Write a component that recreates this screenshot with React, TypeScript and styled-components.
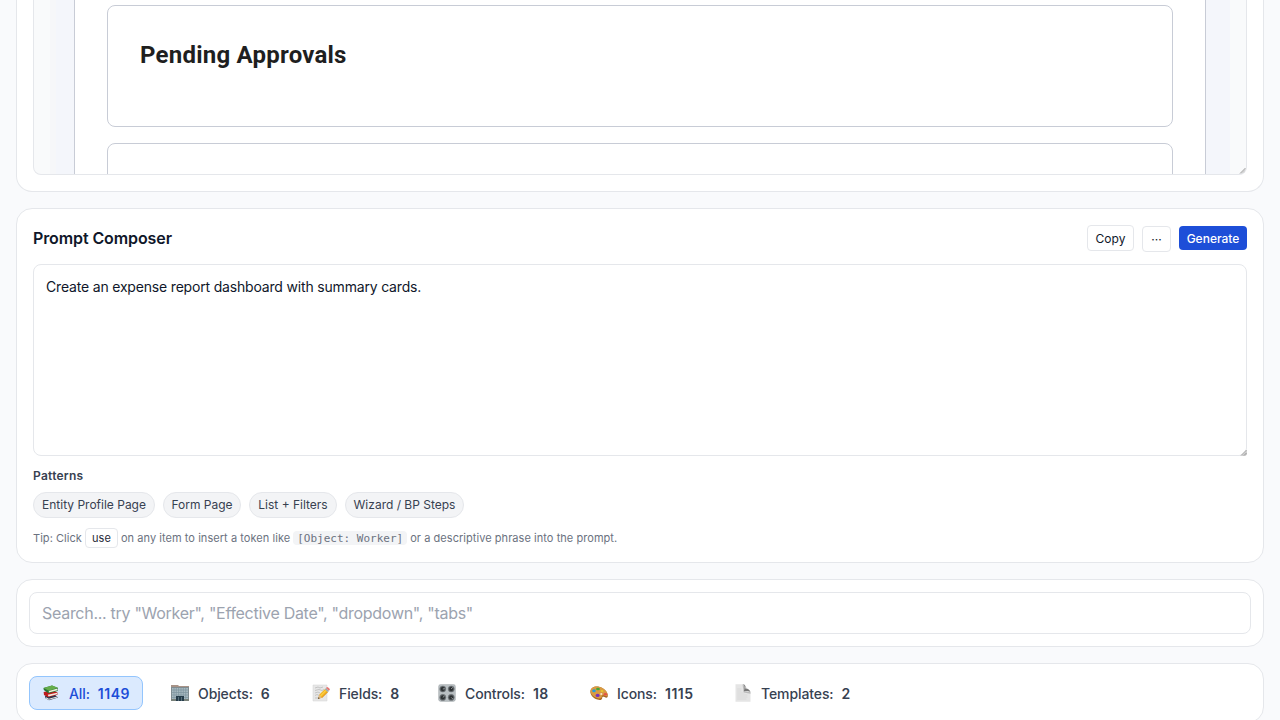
import React from "react";
import styled, { createGlobalStyle } from "styled-components";

const GlobalStyle = createGlobalStyle`
  *, *::before, *::after { box-sizing: border-box; }
  html, body { margin: 0; padding: 0; background: #f9fafb; overflow: hidden; }
  body { font-family: Inter, "Liberation Sans", sans-serif; color: #0f172a; }
  button, textarea, input { font-family: inherit; margin: 0; }
`;

const Page = styled.main`
  height: 720px;
  overflow: hidden;
  display: flex;
  flex-direction: column;
  gap: 16px;
  padding: 0 16px;
  background: #f9fafc;
  & > * { flex-shrink: 0; }
`;

const Panel = styled.section<{ $height: number; $pad?: string }>`
  height: ${(p) => p.$height}px;
  padding: ${(p) => p.$pad ?? "12px"};
  border: 1px solid #e5e7eb;
  border-radius: 16px;
  background: #fff;
`;

const PreviewPanel = styled(Panel)`
  border-top: 0;
  border-radius: 0 0 16px 16px;
`;

const Preview = styled.div`
  position: relative;
  height: 175px;
  padding: 0 16px;
  overflow: hidden;
  border: 1px solid #e5e7eb;
  border-top: 0;
  border-radius: 0 0 8px 8px;
  background: #f9fafb;
`;

const Canvas = styled.div`
  height: 100%;
  padding: 0 24px;
  background: linear-gradient(90deg, #f6f7f9 6px, #f4f6fb 6px);
`;

const Sheet = styled.div`
  height: 100%;
  display: flex;
  flex-direction: column;
  gap: 16px;
  padding: 5px 32px 0;
  border: solid #c8ccd6;
  border-width: 0 1px;
  background: #fff;
`;

const SheetCard = styled.div`
  flex: 0 0 122px;
  padding: 33px 32px 32px;
  border: 1px solid #c8ccd6;
  border-radius: 8px;
`;

const SheetTitle = styled.h2`
  margin: 0;
  font: 700 24px/32px Roboto, sans-serif;
  letter-spacing: 0.23px;
  color: #1f1f1f;
`;

const Grip = styled.svg`
  position: absolute;
  right: 0;
  bottom: 0;
  width: 7px;
  height: 7px;
`;

const Header = styled.header`
  display: flex;
  align-items: flex-start;
  justify-content: space-between;
  height: 27px;
  margin-bottom: 12px;
`;

const Title = styled.h1`
  margin: 1px 0 0;
  font-size: 16px;
  line-height: 24px;
  font-weight: 600;
  letter-spacing: -0.1px;
`;

const Actions = styled.div`
  display: flex;
  align-items: flex-start;
  gap: 8px;
`;

const Button = styled.button<{ $width: number; $primary?: boolean; $drop?: number; $inset?: number }>`
  width: ${(p) => p.$width}px;
  height: ${(p) => (p.$primary ? 24 : 26)}px;
  margin-top: ${(p) => p.$drop ?? 0}px;
  padding: ${(p) => p.$inset ?? 0}px 0 0;
  border: ${(p) => (p.$primary ? "0" : "1px solid #e5e7eb")};
  border-radius: 4px;
  background: ${(p) => (p.$primary ? "#1d4ed8" : "#fff")};
  color: ${(p) => (p.$primary ? "#fff" : "#0f172a")};
  font-size: 12px;
  line-height: 16px;
  font-weight: ${(p) => (p.$primary ? 500 : 400)};
  white-space: nowrap;
`;

const Editor = styled.div`
  position: relative;
  height: 192px;
`;

const PromptArea = styled.textarea`
  display: block;
  width: 100%;
  height: 100%;
  padding: 12px;
  resize: none;
  outline: none;
  border: 1px solid #e5e7eb;
  border-radius: 8px;
  background: #fff;
  color: #0f172a;
  font-size: 14px;
  line-height: 20px;
  letter-spacing: -0.18px;
`;

const PatternsLabel = styled.div`
  margin-top: 12px;
  font-size: 12px;
  line-height: 16px;
  font-weight: 600;
  letter-spacing: 0.25px;
  color: #374151;
`;

const Chips = styled.div`
  display: flex;
  gap: 8px;
  margin-top: 8px;
`;

const Chip = styled.button<{ $width: number }>`
  width: ${(p) => p.$width}px;
  height: 26px;
  padding: 0;
  border: 1px solid #e5e7eb;
  border-radius: 13px;
  background: #f3f4f6;
  color: #374151;
  font-size: 12px;
  line-height: 16px;
  white-space: nowrap;
`;

const Tip = styled.p`
  display: flex;
  align-items: center;
  height: 20px;
  margin: 10px 0 0;
  font-size: 11px;
  letter-spacing: 0.05px;
  color: #6b7280;
  white-space: nowrap;
`;

const Key = styled.span`
  width: 33px;
  height: 20px;
  margin: 0 3px;
  border: 1px solid #e5e7eb;
  border-radius: 4px;
  background: #fff;
  color: #1f2937;
  line-height: 18px;
  text-align: center;
`;

const Code = styled.code`
  width: 114px;
  height: 14px;
  margin: 0 3px;
  border-radius: 4px;
  background: #f3f4f6;
  font: 11px/15px "DejaVu Sans Mono", monospace;
  letter-spacing: 0;
  text-align: center;
`;

const Search = styled.input`
  display: block;
  width: 100%;
  height: 42px;
  padding: 0 12px;
  border: 1px solid #e5e7eb;
  border-radius: 8px;
  outline: none;
  font-size: 16px;
  letter-spacing: -0.285px;
  &::placeholder { color: #9ca3af; opacity: 1; }
`;

const Tabs = styled.nav`
  display: flex;
  gap: 15px;
`;

const Tab = styled.button<{ $width: number; $active?: boolean }>`
  display: flex;
  align-items: center;
  width: ${(p) => p.$width}px;
  height: 34px;
  padding: 0 12px;
  border: 1px solid ${(p) => (p.$active ? "#93c5fd" : "transparent")};
  border-radius: 8px;
  background: ${(p) => (p.$active ? "#dbeafe" : "transparent")};
  color: ${(p) => (p.$active ? "#1d4ed8" : "#374151")};
  font-size: 14px;
  line-height: 20px;
  font-weight: 500;
  white-space: nowrap;
  svg { flex: none; width: 18px; height: 18px; margin-right: 9px; }
  span { padding-top: 2px; letter-spacing: -0.1px; }
  strong { padding-top: 2px; margin-left: 8px; font-weight: 600; letter-spacing: 0.5px; }
`;

const BooksIcon = () => (
  <svg viewBox="0 0 18 18">
    <path d="M3 12l9-2 4 3.5-9 2.8-3.5-2z" fill="#29364d" />
    <path d="M4 13.3l2.8 1.4 8.4-2.3v1.1l-8.4 2.3-2.8-1.3z" fill="#eeeae4" />
    <path d="M1.6 8l9-1.7 4.9 2.2v2.2L6 13.3 2 11z" fill="#bd1c1c" />
    <path d="M5.8 10.8l9.4-2.1v1.5l-8.7 2.2z" fill="#f4e9df" />
    <path d="M1.5 4.1L10 1.4l6 2.7-.3 3-9.3 2.1L1.8 6z" fill="#277434" />
    <path d="M1.5 4.1L10 1.4l6 2.4-9.2 3z" fill="#65ad4b" />
    <path d="M6.8 7.1l8.7-2.5v1.7l-8.7 2.1z" fill="#f0f0de" />
  </svg>
);

const OfficeIcon = () => (
  <svg viewBox="0 0 18 18">
    <path d="M0 1h7v1h11v15H0z" fill="#7f8c91" />
    <path d="M0 1h7l1 1h10v1H0z" fill="#a89387" />
    <path d="M1 4h16v11H1z" fill="#a9bac1" />
    <path d="M1 6h16M1 8.5h16M1 11h16M1 13.5h16M3 4v11M5.3 4v11M7.6 4v11M10 4v11M12.3 4v11M14.7 4v11" stroke="#7c939d" strokeWidth=".7" />
    <path d="M0 15h18v2H0z" fill="#79817a" />
    <path d="M5 12h8v5H5z" fill="#263c4a" />
    <path d="M7.5 13v4M10.5 13v4" stroke="#6e8791" strokeWidth=".7" />
  </svg>
);

const MemoIcon = () => (
  <svg viewBox="0 0 18 18">
    <path d="M1 1h14v16H1z" fill="#e7e7e7" stroke="#d2d2d2" strokeWidth=".5" />
    <path d="M3 4l3-1 2 1 3-1M3 6.5l4-1 3 1 2-1M3 9l3-1 2 1M3 11.5l2-1 2 1M3 14h4" stroke="#b4b4b4" strokeWidth=".7" fill="none" />
    <path d="M6 15l1.2-4.2L13 5l3 3-6 5.8z" fill="#f4b724" />
    <path d="M8 12.5l6-6.2" stroke="#ffdc59" strokeWidth="1" />
    <path d="M9.7 13.9L15.5 8" stroke="#d78316" strokeWidth=".8" />
    <path d="M6 15l1.2-4.2 2.6 2.9z" fill="#dfb88a" />
    <path d="M6 15l.6-1.8 1.1 1z" fill="#35312d" />
    <path d="M12.8 5.2l1.3-1.3 3 3L15.8 8z" fill="#9caab0" />
    <path d="M14 4l.7-.8q.7-.5 1.5.2l1.2 1.2q.8.7.2 1.5l-.6.7z" fill="#e87572" />
  </svg>
);

const KnobsIcon = () => (
  <svg viewBox="0 0 18 18">
    <rect x=".3" y=".3" width="17.4" height="17.4" rx="2.4" fill="#aeb4b7" />
    <rect x="1" y="1" width="16" height="16" rx="2" fill="#b9bfc2" />
    {[[4.8, 5], [13.2, 5], [4.8, 13.4], [13.2, 13.4]].map(([x, y], i) => (
      <g key={i}>
        <circle cx={x} cy={y} r="3.1" fill="#54595c" stroke="#7b8184" strokeWidth=".5" />
        <circle cx={x} cy={y} r="1.9" fill="#2a2e30" />
        <path d={i === 3 ? `M${x} ${y}l1.7 1.7` : i === 2 ? `M${x} ${y}l1.7-1.4` : `M${x} ${y}l${i ? "1.4-1.6" : "2-.3"}`} stroke="#b5bbbd" strokeWidth=".8" />
      </g>
    ))}
  </svg>
);

const PaletteIcon = () => (
  <svg viewBox="0 0 18 18">
    <path d="M.4 7.2C.7 3.7 4 2 8 2.5c5.3.7 10 5.4 9.8 9.3-.1 2.3-1.6 2.2-3.3 1.3-1.6-.9-2.2-.4-2.3.8-.2 2.1-2.2 2.4-4.9 1.6C3.1 14.2 0 10.6.4 7.2z" fill="#a76622" />
    <path d="M.5 6.8C.9 3.7 4 2 8 2.5c5 .6 9.5 4.6 9.6 8.1.1 2.1-1.4 1.9-3.2 1-1.7-.8-2.5-.1-2.6 1.2-.1 1.9-2.2 2.1-4.7 1.2C3.1 12.8.2 9.8.5 6.8z" fill="#d99b43" />
    <ellipse cx="8" cy="5" rx="1.9" ry="1.3" fill="#42a83a" />
    <ellipse cx="4" cy="6.7" rx="1.8" ry="1.5" fill="#259fd7" />
    <ellipse cx="12" cy="7" rx="1.4" ry="1.1" fill="#e8c92c" />
    <ellipse cx="15.4" cy="10.2" rx="1.7" ry="1.2" fill="#e35445" />
    <ellipse cx="7.6" cy="11.4" rx="2" ry="1.6" fill="#7931bc" />
    <ellipse cx="11.3" cy="10" rx="1.1" ry=".8" fill="#fff" />
  </svg>
);

const PageIcon = () => (
  <svg viewBox="0 0 18 18">
    <path d="M1.5.3h8.2L16.5 8v9.7h-15z" fill="#e5e5e5" />
    <path d="M8.5.3c2.2.8 2.6 3.4 1.5 6.8l6.5 1.2v1.5L9.8 8.4 8.5.3z" fill="#bababa" />
    <path d="M9 0c3.3 1.4 2.4 3.3 2.3 4.4 1.9-.2 4.9 1.4 5.2 3.8-1.9-1.5-4.2-1.2-6.8-.9C10.8 4.5 11.2 1.8 9 0z" fill="#777" />
    <path d="M3.3 5h4M3.3 7h4M3.3 9h7M3.3 11h10M3.3 13h10M3.3 15h9" stroke="#d0d0d0" strokeWidth=".6" />
  </svg>
);

const ResizeGrip = () => (
  <Grip viewBox="0 0 7 7">
    <path d="M1 7L7 1v4.5L5.5 7z" fill="#d0d0d0" />
    <path d="M1 6.5L6.5 1M4 6.5L6.5 4" stroke="#8c8c8c" strokeWidth=".8" fill="none" />
  </Grip>
);

const patterns = [
  { label: "Entity Profile Page", width: 122 },
  { label: "Form Page", width: 78 },
  { label: "List + Filters", width: 88 },
  { label: "Wizard / BP Steps", width: 119 },
];

const tabs = [
  { label: "All:", count: 1149, width: 114, icon: <BooksIcon /> },
  { label: "Objects:", count: 6, width: 126, icon: <OfficeIcon /> },
  { label: "Fields:", count: 8, width: 111, icon: <MemoIcon /> },
  { label: "Controls:", count: 18, width: 137, icon: <KnobsIcon /> },
  { label: "Icons:", count: 1115, width: 129, icon: <PaletteIcon /> },
  { label: "Templates:", count: 2, width: 140, icon: <PageIcon /> },
];

export default function App() {
  return (
    <>
      <GlobalStyle />
      <Page>
        <PreviewPanel $height={192} $pad="0 16px 16px">
          <Preview>
            <Canvas>
              <Sheet>
                <SheetCard><SheetTitle>Pending Approvals</SheetTitle></SheetCard>
                <SheetCard />
              </Sheet>
            </Canvas>
            <ResizeGrip />
          </Preview>
        </PreviewPanel>

        <Panel $height={355} $pad="16px">
          <Header>
            <Title>Prompt Composer</Title>
            <Actions>
              <Button $width={47} $inset={2}>Copy</Button>
              <Button $width={29} $drop={1} $inset={1}>···</Button>
              <Button $width={68} $drop={1} $inset={2} $primary>Generate</Button>
            </Actions>
          </Header>
          <Editor>
            <PromptArea defaultValue="Create an expense report dashboard with summary cards." spellCheck={false} />
            <ResizeGrip />
          </Editor>
          <PatternsLabel>Patterns</PatternsLabel>
          <Chips>
            {patterns.map((p) => <Chip key={p.label} $width={p.width}>{p.label}</Chip>)}
          </Chips>
          <Tip>
            Tip: Click <Key>use</Key> on any item to insert a token like <Code>[Object: Worker]</Code> or a descriptive phrase into the prompt.
          </Tip>
        </Panel>

        <Panel $height={68}>
          <Search placeholder={'Search... try "Worker", "Effective Date", "dropdown", "tabs"'} />
        </Panel>

        <Panel $height={60}>
          <Tabs>
            {tabs.map((t, i) => (
              <Tab key={t.label} $width={t.width} $active={i === 0}>
                {t.icon}<span>{t.label}</span><strong>{t.count}</strong>
              </Tab>
            ))}
          </Tabs>
        </Panel>
      </Page>
    </>
  );
}
